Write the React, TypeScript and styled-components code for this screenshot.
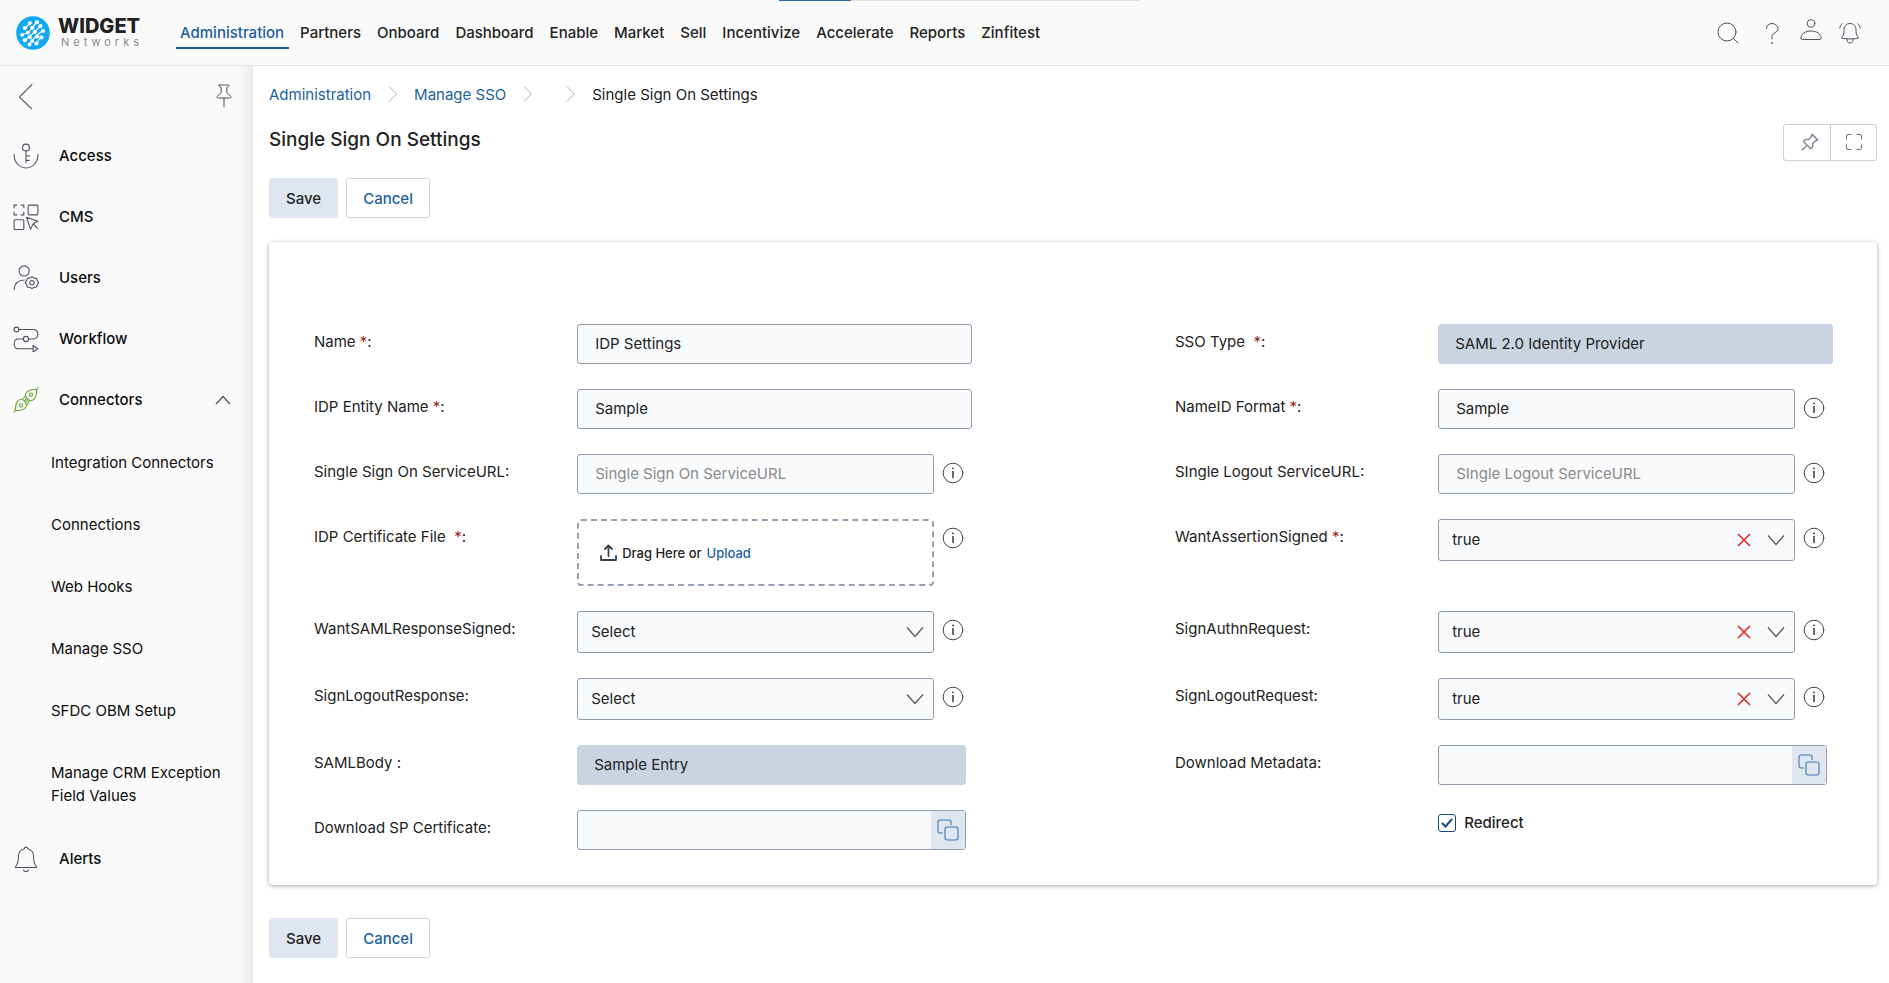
import React from "react";
import styled, { createGlobalStyle, css } from "styled-components";

const GlobalStyle = createGlobalStyle`
  *, *::before, *::after { box-sizing: border-box; }
  body { margin: 0; background: #fff; }
  body, button, input, select {
    font-family: Inter, "Liberation Sans", sans-serif;
    font-size: 15px;
    color: #222;
  }
  a { text-decoration: none; color: inherit; }
  button { cursor: pointer; }
`;

const line = "#4a5260";
const blue = "#1c5f9e";

const Page = styled.div`
  min-height: 100vh;
  display: flex;
  flex-direction: column;
`;

/* ---------- header ---------- */

const Header = styled.header`
  position: relative;
  display: flex;
  align-items: center;
  height: 66px;
  padding: 0 27px 0 16px;
  background: #fafafa;
  border-bottom: 1px solid #dfe5ee;
`;

const Progress = styled.div`
  position: absolute;
  top: 0;
  left: 779px;
  width: 362px;
  height: 1px;
  background: #e2e2e2;
`;

const ProgressValue = styled.div`
  width: 20%;
  height: 100%;
  background: #2a689f;
`;

const Logo = styled.a`
  display: flex;
  align-items: center;
  gap: 8px;
  width: 160px;
  flex: none;
`;

const LogoText = styled.span`
  display: flex;
  flex-direction: column;
`;

const LogoName = styled.strong`
  font-size: 20px;
  line-height: 20px;
  font-weight: 800;
  color: #222;
`;

const LogoSub = styled.span`
  padding-left: 3px;
  font-size: 11px;
  line-height: 13px;
  letter-spacing: 4px;
  color: #8a8a8a;
`;

const Nav = styled.nav`
  display: flex;
  gap: 16px;
  flex: 1;
`;

const NavLink = styled.a<{ $active?: boolean }>`
  padding: 6px 0 4px;
  line-height: 20px;
  font-weight: 500;
  white-space: nowrap;
  border-bottom: 2px solid transparent;
  ${(p) =>
    p.$active &&
    css`
      margin-right: -5px;
      padding-left: 4px;
      padding-right: 5px;
      color: ${blue};
      border-color: ${blue};
    `}
`;

const HeaderTools = styled.div`
  display: flex;
  align-items: center;
  gap: 15px;
`;

const IconButton = styled.button`
  display: flex;
  padding: 0;
  border: 0;
  background: none;
  color: ${line};
`;

const SearchButton = styled(IconButton)`
  margin-right: 5px;
`;

const AccountButton = styled(IconButton)`
  padding-bottom: 5px;
`;

/* ---------- sidebar ---------- */

const Body = styled.div`
  display: flex;
  flex: 1;
`;

const Sidebar = styled.aside`
  width: 253px;
  flex: none;
  background: linear-gradient(to left, #e9eaec, #fafafa 14px);
`;

const SidebarTop = styled.div`
  display: flex;
  align-items: center;
  justify-content: space-between;
  height: 59px;
  padding: 0 17px 0 14px;
`;

const List = styled.ul`
  margin: 0;
  padding: 0;
  list-style: none;
`;

const SubList = styled(List)`
  padding: 1px 0 2px;
`;

const MenuItem = styled.a`
  display: flex;
  align-items: center;
  gap: 20px;
  height: 61px;
  padding: 0 22px 0 13px;
  font-weight: 500;
  color: #0c0c0c;
`;

const MenuLabel = styled.span`
  flex: 1;
`;

const SubItem = styled.a`
  display: block;
  padding: 20px 24px 19px 51px;
  line-height: 23px;
  color: #0c0c0c;
`;

/* ---------- main column ---------- */

const Main = styled.main`
  flex: 1;
  min-width: 0;
  padding: 17px 12px 24px 16px;
`;

const Crumbs = styled.nav`
  display: flex;
  align-items: center;
  gap: 17px;
  height: 22px;
  color: #a9adb3;
`;

const Crumb = styled.a`
  color: ${blue};
`;

const Current = styled.span`
  color: #222;
`;

const EmptyCrumb = styled.span``;

const TitleRow = styled.div`
  display: flex;
  justify-content: space-between;
  align-items: center;
  height: 38px;
  margin-top: 18px;
`;

const Title = styled.h1`
  margin: 0;
  padding-bottom: 4px;
  font-size: 19px;
  font-weight: 500;
  line-height: 24px;
`;

const ToolGroup = styled.div`
  display: flex;
  border: 1px solid #c9d0db;
  border-radius: 3px;
`;

const ToolButton = styled.button`
  display: grid;
  place-items: center;
  width: 46px;
  height: 35px;
  padding: 0 0 0 6px;
  border: 0;
  background: none;
  color: #6b7480;
  & + & {
    padding: 0;
    border-left: 1px solid #c9d0db;
  }
`;

const Actions = styled.div`
  display: flex;
  gap: 8px;
`;

const TopActions = styled(Actions)`
  margin: 17px 0 24px;
`;

const BottomActions = styled(Actions)`
  margin-top: 33px;
`;

const Button = styled.button<{ $primary?: boolean }>`
  height: 40px;
  padding: 0 16px;
  font-weight: 500;
  border-radius: 3px;
  border: 1px solid ${(p) => (p.$primary ? "#dfe6ef" : "#c9d0db")};
  background: ${(p) => (p.$primary ? "#dfe6ef" : "#fff")};
  color: ${(p) => (p.$primary ? "#222" : blue)};
`;

/* ---------- form ---------- */

const Card = styled.form`
  display: grid;
  grid-template-columns: minmax(0, 1fr) minmax(0, 1fr);
  column-gap: 203px;
  row-gap: 25px;
  align-items: start;
  padding: 82px 44px 35px 45px;
  border-radius: 4px;
  background: #fff;
  box-shadow: 0 1px 4px rgba(0, 0, 0, 0.36);
`;

const Field = styled.div`
  display: flex;
  align-items: flex-start;
`;

const FieldLabel = styled.label`
  width: 40%;
  flex: none;
  padding-top: 8px;
  line-height: 20px;
`;

const Star = styled.span`
  color: #9b1c1c;
`;

const Control = styled.div`
  display: flex;
  align-items: flex-start;
  flex: 1;
  min-width: 0;
`;

const box = css`
  flex: 1;
  min-width: 0;
  border: 1px solid #919dae;
  border-radius: 3px;
  background: #f9fafc;
  outline: none;
`;

const TextInput = styled.input`
  ${box}
  height: 40px;
  padding: 0 17px 2px;
  &::placeholder {
    color: #8a8a8a;
    opacity: 1;
  }
`;

const LockedInput = styled(TextInput)<{ $narrow?: boolean }>`
  padding: 0 16px 2px;
  margin-right: ${(p) => (p.$narrow ? 6 : 0)}px;
  border-color: #cad4e0;
  background: #cad4e0;
`;

const CopyBox = styled.div`
  ${box}
  display: flex;
  height: 40px;
  margin-right: 6px;
`;

const CopyInput = styled.input`
  flex: 1;
  min-width: 0;
  padding: 0 17px;
  border: 0;
  background: none;
  outline: none;
`;

const CopyButton = styled.button`
  display: grid;
  place-items: center;
  width: 34px;
  padding: 0;
  border: 0;
  background: #dfe6ef;
  color: #3c78b4;
`;

const SelectBox = styled.div`
  display: grid;
  align-items: center;
  flex: 1;
  min-width: 0;
`;

const Select = styled.select`
  ${box}
  appearance: none;
  grid-area: 1 / 1;
  height: 42px;
  padding: 0 80px 2px 13px;
`;

const SelectIcons = styled.div`
  grid-area: 1 / 1;
  justify-self: end;
  display: flex;
  align-items: center;
  gap: 16px;
  padding-right: 10px;
  color: #555;
  pointer-events: none;
`;

const ClearButton = styled(IconButton)`
  color: #dc2626;
  pointer-events: auto;
`;

const DropZone = styled.div`
  display: flex;
  align-items: center;
  flex: 1;
  height: 67px;
  padding-left: 21px;
  border: 2px dashed #97a0b2;
  border-radius: 4px;
  font-size: 13px;
  font-weight: 500;
  line-height: 20px;
`;

const DropText = styled.span`
  margin: 0 5px;
`;

const UploadButton = styled.button`
  padding: 0;
  border: 0;
  background: none;
  font-size: 13px;
  font-weight: 500;
  color: ${blue};
`;

const InfoButton = styled(IconButton)`
  flex: none;
  margin: 8px 8px 0;
  color: #3f4650;
`;

const CheckRow = styled.label`
  display: flex;
  align-items: center;
  gap: 8px;
  margin: 3px 0 0 40%;
  line-height: 20px;
  font-weight: 500;
`;

const CheckBoxWrap = styled.span`
  display: grid;
  place-items: center;
`;

const CheckBox = styled.input`
  appearance: none;
  grid-area: 1 / 1;
  width: 18px;
  height: 18px;
  margin: 0;
  border: 1px solid #174a7c;
  border-radius: 3px;
  background: #fff;
  & + svg {
    grid-area: 1 / 1;
    visibility: hidden;
    pointer-events: none;
  }
  &:checked + svg {
    visibility: visible;
  }
`;

/* ---------- drawings ---------- */

type DrawProps = {
  size?: number;
  w?: number;
  box?: string;
  color?: string;
  children: React.ReactNode;
};

const Draw = ({ size = 24, w = 1, box: vb = "0 0 24 24", color = "currentColor", children }: DrawProps) => (
  <svg
    width={size}
    height={size}
    viewBox={vb}
    fill="none"
    stroke={color}
    strokeWidth={w}
    strokeLinecap="round"
    strokeLinejoin="round"
    aria-hidden="true"
  >
    {children}
  </svg>
);

const LogoMark = () => (
  <svg width="34" height="34" viewBox="0 0 34 34" aria-hidden="true">
    <circle cx="17" cy="17" r="16.8" fill="#0fa8f5" />
    <g stroke="#fff" strokeWidth="1.200" strokeLinecap="round">
      <path d="M9.500 12 13.500 7.500M7 18.500 11.500 16.500 15.500 12.500 20.500 6.500M8.500 24.500 13.500 20.500 18 16.500 24 10.500M14 27.500 16 24.500 20 20.500 26.500 14.500M20.500 27.500 24.500 21.500" />
    </g>
    <g fill="#fff">
      <circle cx="13.800" cy="7" r="2.100" />
      <circle cx="21" cy="6.200" r="2.100" />
      <circle cx="8.800" cy="12" r="2.100" />
      <circle cx="16.200" cy="11.800" r="2.100" />
      <circle cx="24.500" cy="10" r="2.100" />
      <circle cx="11.800" cy="16.500" r="2.100" />
      <circle cx="6.200" cy="18.800" r="1.900" />
      <circle cx="18.800" cy="16" r="2.100" />
      <circle cx="27" cy="15" r="2.100" />
      <circle cx="13.800" cy="21" r="2.100" />
      <circle cx="21" cy="20.500" r="2.100" />
      <circle cx="8.800" cy="24.200" r="2.100" />
      <circle cx="16.200" cy="25" r="1.900" />
      <circle cx="25.500" cy="21.500" r="2.100" />
      <circle cx="13.500" cy="28.500" r="2" />
      <circle cx="20.500" cy="27.500" r="2.100" />
    </g>
  </svg>
);

const SearchIcon = () => (
  <Draw>
    <circle cx="11" cy="11" r="9" />
    <path d="M17.4 17.4 22 22" />
  </Draw>
);

const HelpIcon = () => (
  <Draw>
    <path d="M6.5 7.5C6.5 4.500 9 2.500 12 2.500s6 2 6 5c0 4.500-6 4-6 8v2.500" />
    <circle cx="12" cy="22" r=".4" />
  </Draw>
);

const UserIcon = () => (
  <Draw>
    <circle cx="12" cy="5.500" r="3.800" />
    <path d="M2 20.300c0-4.500 4.500-7.300 10-7.300s10 2.800 10 7.300c0 .7-.4 1.200-1.200 1.200H3.200c-.8 0-1.200-.5-1.200-1.200Z" />
  </Draw>
);

const RingingIcon = () => (
  <Draw>
    <path d="M12 2.500c-4 0-6 2.800-6 6.300 0 5-1 6.200-2.700 8.200 2.500.6 5.500 1 8.700 1s6.200-.4 8.700-1C19 15 18 13.800 18 8.800c0-3.500-2-6.300-6-6.300Z" />
    <path d="M8.800 18c0 2.600 1.200 4 3.200 4s3.200-1.400 3.200-4M4.300 2.500C2.800 3.700 2 5.200 1.800 7M19.700 2.500c1.500 1.200 2.300 2.700 2.500 4.500" />
  </Draw>
);

const AccessIcon = () => (
  <Draw size={26} color={line}>
    <path d="M1 10.500C1 17.500 5.500 23 12 23s11-5.500 11-12.500" />
    <circle cx="12" cy="4.200" r="3.200" />
    <path d="M12 7.500V18M12 12h3.500M12 16h3" />
  </Draw>
);

const CmsIcon = () => (
  <Draw size={26} color={line}>
    <path d="M1 3.500V1h2.500M7.500 1H10v2.500M10 7.500V10H7.500M3.500 10H1V7.500" />
    <rect x="14" y="1" width="9" height="9" rx="1" />
    <rect x="1" y="14.500" width="9" height="9" rx="1" />
    <path d="M12.500 12.300 23 16l-4.300 2.200 3.800 4.200M12.500 12.300l3.700 10.900 2.500-5" />
  </Draw>
);

const UsersIcon = () => (
  <Draw size={26} color={line}>
    <circle cx="10.300" cy="5.500" r="4.700" />
    <path d="M1.200 22.500C1.200 17 5 13.800 10.500 13.800" />
    <path d="m17.500 10.800 1.900 1.300 2.300.1.700 2.200 1.300 1.900-1.300 1.900-.7 2.200-2.300.1-1.900 1.300-1.900-1.300-2.300-.1-.7-2.200-1.300-1.900 1.300-1.900.7-2.200 2.300-.1Z" />
    <circle cx="17.500" cy="16.300" r="2" />
  </Draw>
);

const WorkflowIcon = () => (
  <Draw size={26} color={line}>
    <circle cx="3.200" cy="3.200" r="2.200" />
    <circle cx="12" cy="12" r="2.400" />
    <path d="M5.500 3.200H19c5.200 0 5.200 8.800 0 8.800h-4.500M9.500 12H5c-5.200 0-5.200 9 0 9h13.500M18.500 18v6l4.500-3Z" />
  </Draw>
);

const ConnectorsIcon = () => (
  <Draw size={26} color="#6aa82e">
    <path d="M23.300.7l-1.600 1.600c-4.700-.2-8.300.9-9.700 3.500-1.100 2 .1 4.200 1.800 5.600 1.700 1.500 4 1.500 5.600-.2 2.200-2.300 2.600-5.200 2.300-8.900ZM.7 23.300l1.600-1.600c4.700.2 8.300-.9 9.700-3.500 1-2-.1-4.200-1.800-5.600-1.700-1.500-4-1.500-5.600.2-2.200 2.300-2.600 5.200-2.300 8.900Z" />
    <path d="M11 8.500 8.700 11.500M15.400 12.800 13 16M12.500 10.500l-2 2.500M13.800 11.500l-2 2.500" />
    <circle cx="16.500" cy="7" r="1.500" />
    <circle cx="7.500" cy="17" r="1.500" />
  </Draw>
);

const AlertIcon = () => (
  <Draw size={26} color={line}>
    <path d="M12 1c-.9 0-1.400.6-1.600 1.500C7 3.500 5 6 5 9.500c0 5-.5 7.500-2.700 9.500-.3.300-.1.800.3.800h18.800c.4 0 .6-.5.300-.8C19.500 17 19 14.500 19 9.500c0-3.500-2-6-5.400-7C13.400 1.600 12.900 1 12 1ZM9.700 22.300c.4.800 1.200 1.200 2.300 1.200s1.900-.4 2.300-1.200" />
  </Draw>
);

const BackIcon = () => (
  <Draw size={26}>
    <path d="M16.500 1.500 5 13l11.500 11" />
  </Draw>
);

const PinIcon = () => (
  <Draw>
    <path d="M7.500 1h9c.8 0 .8 1.200 0 1.500l-1.700 1v5.300l3.400 2.900c1.300 1.200 1 2.300-.5 2.300H6.300c-1.500 0-1.800-1.100-.5-2.300l3.400-2.900V3.500l-1.700-1c-.8-.3-.8-1.500 0-1.500ZM12 14v9" />
  </Draw>
);

const TackIcon = () => (
  <Draw size={18} w={1.900} color="#808a98">
    <path d="m14.500 1.500 8 8-3.300.8-3.700 3.700.2 4L13 21 3.300 11.200l3-2.700 4 .2 3.500-3.800ZM8.200 16.200 1.500 22.500" />
  </Draw>
);

const ExpandIcon = () => (
  <Draw size={18} w={1.400}>
    <path d="M2 8V4.500C2 3 3 2 4.500 2H8M16 2h3.500C21 2 22 3 22 4.500V8M22 16v3.500c0 1.500-1 2.500-2.500 2.500H16M8 22H4.500C3 22 2 21 2 19.500V16" />
  </Draw>
);

const CrumbChevron = () => (
  <svg width="9" height="16" viewBox="0 0 9 16" fill="none" stroke="currentColor" aria-hidden="true">
    <path d="M1 .5 8.500 8 1 15.500" />
  </svg>
);

const DownIcon = () => (
  <svg width="18" height="12" viewBox="0 0 18 12" fill="none" stroke="currentColor" strokeWidth="1.200" aria-hidden="true">
    <path d="m1 1.500 8 9 8-9" />
  </svg>
);

const UpIcon = () => (
  <svg width="16" height="10" viewBox="0 0 16 10" fill="none" stroke="#555" strokeWidth="1.300" aria-hidden="true">
    <path d="M1 9l7-7.500L15 9" />
  </svg>
);

const ClearIcon = () => (
  <svg width="14" height="14" viewBox="0 0 14 14" fill="none" stroke="currentColor" strokeWidth="1.600" aria-hidden="true">
    <path d="m1 1 12 12M13 1 1 13" />
  </svg>
);

const InfoIcon = () => (
  <Draw size={22} box="0 0 22 22">
    <circle cx="11" cy="11" r="9.800" />
    <path d="M11 9.500v6" strokeWidth="1.600" />
    <circle cx="11" cy="6.400" r=".6" fill="currentColor" />
  </Draw>
);

const CopyIcon = () => (
  <Draw size={22} w={1.100} box="0 0 22 22">
    <path d="M5.500 14H3.200C1.900 14 1 13.100 1 11.800V3.200C1 1.900 1.900 1 3.200 1h8.600C13.100 1 14 1.900 14 3.200v2.300" />
    <rect x="8" y="8" width="13" height="13" rx="2.200" />
  </Draw>
);

const UploadIcon = () => (
  <Draw size={17} w={1.800} box="0 0 17 17" color="#36414d">
    <path d="M1 12v4h15v-4M8.500 12V1.500M5 5l3.500-3.500L12 5" />
  </Draw>
);

const CheckIcon = () => (
  <svg width="12" height="10" viewBox="0 0 12 10" fill="none" stroke="#174a7c" strokeWidth="2" aria-hidden="true">
    <path d="m1 5 3.500 3.500L11 1" />
  </svg>
);

/* ---------- parts of the form ---------- */

type FieldProps = {
  id: string;
  label: string;
  required?: boolean;
  info?: boolean;
  children: React.ReactNode;
};

const FormField = ({ id, label, required, info, children }: FieldProps) => (
  <Field>
    <FieldLabel htmlFor={id}>
      {label}
      {required ? (
        <>
          {" "}
          <Star>*</Star>:
        </>
      ) : (
        ":"
      )}
    </FieldLabel>
    <Control>
      {children}
      {info && (
        <InfoButton type="button" aria-label={`About ${label}`}>
          <InfoIcon />
        </InfoButton>
      )}
    </Control>
  </Field>
);

const Choice = ({ id, value }: { id: string; value?: string }) => (
  <SelectBox>
    <Select id={id} defaultValue={value ?? ""}>
      <option value="">Select</option>
      <option value="true">true</option>
      <option value="false">false</option>
    </Select>
    <SelectIcons>
      {value && (
        <ClearButton type="button" aria-label="Clear">
          <ClearIcon />
        </ClearButton>
      )}
      <DownIcon />
    </SelectIcons>
  </SelectBox>
);

const CopyField = ({ id }: { id: string }) => (
  <CopyBox>
    <CopyInput id={id} />
    <CopyButton type="button" aria-label="Copy">
      <CopyIcon />
    </CopyButton>
  </CopyBox>
);

const SaveCancel = () => (
  <>
    <Button type="button" $primary>
      Save
    </Button>
    <Button type="button">Cancel</Button>
  </>
);

const navItems = [
  "Administration", "Partners", "Onboard", "Dashboard", "Enable", "Market",
  "Sell", "Incentivize", "Accelerate", "Reports", "Zinfitest",
];

const menu = [
  { label: "Access", icon: <AccessIcon /> },
  { label: "CMS", icon: <CmsIcon /> },
  { label: "Users", icon: <UsersIcon /> },
  { label: "Workflow", icon: <WorkflowIcon /> },
  {
    label: "Connectors",
    icon: <ConnectorsIcon />,
    children: [
      "Integration Connectors", "Connections", "Web Hooks",
      "Manage SSO", "SFDC OBM Setup", "Manage CRM Exception Field Values",
    ],
  },
  { label: "Alerts", icon: <AlertIcon /> },
];

export default function App() {
  return (
    <Page>
      <GlobalStyle />
      <Header>
        <Progress>
          <ProgressValue />
        </Progress>
        <Logo href="#">
          <LogoMark />
          <LogoText>
            <LogoName>WIDGET</LogoName>
            <LogoSub>Networks</LogoSub>
          </LogoText>
        </Logo>
        <Nav>
          {navItems.map((item, i) => (
            <NavLink key={item} href="#" $active={i === 0}>
              {item}
            </NavLink>
          ))}
        </Nav>
        <HeaderTools>
          <SearchButton aria-label="Search">
            <SearchIcon />
          </SearchButton>
          <IconButton aria-label="Help">
            <HelpIcon />
          </IconButton>
          <AccountButton aria-label="Account">
            <UserIcon />
          </AccountButton>
          <IconButton aria-label="Notifications">
            <RingingIcon />
          </IconButton>
        </HeaderTools>
      </Header>
      <Body>
        <Sidebar>
          <SidebarTop>
            <IconButton aria-label="Back">
              <BackIcon />
            </IconButton>
            <IconButton aria-label="Pin menu">
              <PinIcon />
            </IconButton>
          </SidebarTop>
          <List>
            {menu.map((item) => (
              <li key={item.label}>
                <MenuItem href="#">
                  {item.icon}
                  <MenuLabel>{item.label}</MenuLabel>
                  {item.children && <UpIcon />}
                </MenuItem>
                {item.children && (
                  <SubList>
                    {item.children.map((sub) => (
                      <li key={sub}>
                        <SubItem href="#">{sub}</SubItem>
                      </li>
                    ))}
                  </SubList>
                )}
              </li>
            ))}
          </List>
        </Sidebar>
        <Main>
          <Crumbs>
            <Crumb href="#">Administration</Crumb>
            <CrumbChevron />
            <Crumb href="#">Manage SSO</Crumb>
            <CrumbChevron />
            <EmptyCrumb />
            <CrumbChevron />
            <Current>Single Sign On Settings</Current>
          </Crumbs>
          <TitleRow>
            <Title>Single Sign On Settings</Title>
            <ToolGroup>
              <ToolButton aria-label="Pin page">
                <TackIcon />
              </ToolButton>
              <ToolButton aria-label="Full screen">
                <ExpandIcon />
              </ToolButton>
            </ToolGroup>
          </TitleRow>
          <TopActions>
            <SaveCancel />
          </TopActions>
          <Card>
            <FormField id="name" label="Name" required>
              <TextInput id="name" defaultValue="IDP Settings" />
            </FormField>
            <FormField id="sso-type" label={"SSO Type\u00a0"} required>
              <LockedInput id="sso-type" readOnly value="SAML 2.0 Identity Provider" />
            </FormField>

            <FormField id="entity" label="IDP Entity Name" required>
              <TextInput id="entity" defaultValue="Sample" />
            </FormField>
            <FormField id="name-id" label="NameID Format" required info>
              <TextInput id="name-id" defaultValue="Sample" />
            </FormField>

            <FormField id="sso-url" label="Single Sign On ServiceURL" info>
              <TextInput id="sso-url" placeholder="Single Sign On ServiceURL" />
            </FormField>
            <FormField id="slo-url" label="SIngle Logout ServiceURL" info>
              <TextInput id="slo-url" placeholder="SIngle Logout ServiceURL" />
            </FormField>

            <FormField id="certificate" label={"IDP Certificate File\u00a0"} required info>
              <DropZone>
                <UploadIcon />
                <DropText>Drag Here or</DropText>
                <UploadButton id="certificate" type="button">
                  Upload
                </UploadButton>
              </DropZone>
            </FormField>
            <FormField id="assertion" label="WantAssertionSigned" required info>
              <Choice id="assertion" value="true" />
            </FormField>

            <FormField id="response" label="WantSAMLResponseSigned" info>
              <Choice id="response" />
            </FormField>
            <FormField id="authn" label="SignAuthnRequest" info>
              <Choice id="authn" value="true" />
            </FormField>

            <FormField id="logout-response" label="SignLogoutResponse" info>
              <Choice id="logout-response" />
            </FormField>
            <FormField id="logout-request" label="SignLogoutRequest" info>
              <Choice id="logout-request" value="true" />
            </FormField>

            <FormField id="saml-body" label="SAMLBody ">
              <LockedInput id="saml-body" readOnly value="Sample Entry" $narrow />
            </FormField>
            <FormField id="metadata" label="Download Metadata">
              <CopyField id="metadata" />
            </FormField>

            <FormField id="sp-certificate" label="Download SP Certificate">
              <CopyField id="sp-certificate" />
            </FormField>
            <CheckRow>
              <CheckBoxWrap>
                <CheckBox type="checkbox" defaultChecked />
                <CheckIcon />
              </CheckBoxWrap>
              Redirect
            </CheckRow>
          </Card>
          <BottomActions>
            <SaveCancel />
          </BottomActions>
        </Main>
      </Body>
    </Page>
  );
}
